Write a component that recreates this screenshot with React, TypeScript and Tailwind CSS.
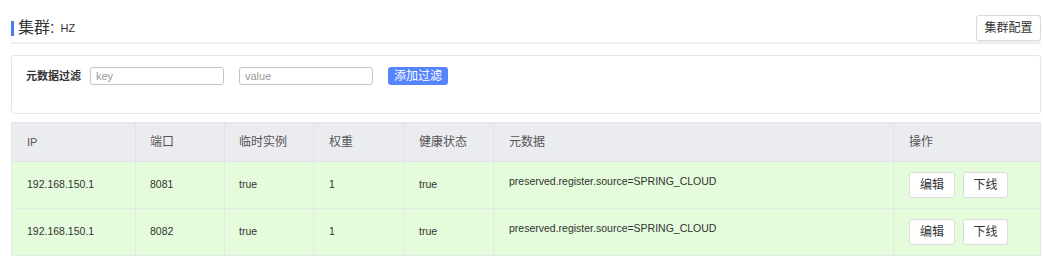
import React from 'react';

const rows = [
  { ip: '192.168.150.1', port: '8081', ephemeral: 'true', weight: '1', healthy: 'true', meta: 'preserved.register.source=SPRING_CLOUD' },
  { ip: '192.168.150.1', port: '8082', ephemeral: 'true', weight: '1', healthy: 'true', meta: 'preserved.register.source=SPRING_CLOUD' },
];

const font = { fontFamily: '"Liberation Sans", "Noto Sans CJK SC", sans-serif' };

const App = () => {
  return (
    <div className="w-[1043px] h-[260px] bg-white pl-[11px] pr-[2px] pt-[15px] text-[#333]" style={font}>
      <div className="flex items-center justify-between h-[26px]">
        <div className="flex items-center">
          <span className="w-[3px] h-[15px] bg-[#4a7bf7] mr-[4px]" />
          <span className="text-[16px] text-[#333] leading-none">集群:</span>
          <span className="text-[11px] text-[#333] ml-[6px]">HZ</span>
        </div>
        <button className="w-[65px] h-[26px] border border-[#d9d9d9] rounded-[3px] text-[12px] text-[#333] bg-white shadow-[0_1px_1px_rgba(0,0,0,0.05)]">
          集群配置
        </button>
      </div>
      <div className="mt-[1px] h-[2px] bg-[#eeeeee]" />

      <div className="mt-[11px] h-[59px] border border-[#e6e6e6] rounded-[3px] px-[14px] pt-[11px]">
        <div className="flex items-center h-[18px]">
          <span className="text-[11px] font-bold text-[#333] w-[64px]">元数据过滤</span>
          <input
            placeholder="key"
            className="w-[134px] h-[18px] border border-[#c4c6cf] rounded-[3px] px-[5px] text-[11px] placeholder:text-[#999] outline-none"
          />
          <input
            placeholder="value"
            className="ml-[15px] w-[134px] h-[18px] border border-[#c4c6cf] rounded-[3px] px-[5px] text-[11px] placeholder:text-[#999] outline-none"
          />
          <button className="ml-[15px] w-[60px] h-[18px] bg-[#5584ff] rounded-[3px] text-[12px] text-white leading-none">
            添加过滤
          </button>
        </div>
      </div>

      <table className="mt-[8px] w-full border-collapse text-[12px] text-[#333]">
        <thead>
          <tr className="h-[39px] bg-[#ebecf0] text-left text-[#555]">
            <th className="w-[124px] pl-[15px] font-normal text-[11px] border border-[#e3e4e8]">IP</th>
            <th className="w-[89px] pl-[14px] font-normal border border-[#e3e4e8]">端口</th>
            <th className="w-[89px] pl-[14px] font-normal border border-[#e3e4e8]">临时实例</th>
            <th className="w-[90px] pl-[15px] font-normal border border-[#e3e4e8]">权重</th>
            <th className="w-[90px] pl-[15px] font-normal border border-[#e3e4e8]">健康状态</th>
            <th className="w-[400px] pl-[15px] font-normal border border-[#e3e4e8]">元数据</th>
            <th className="pl-[15px] font-normal border border-[#e3e4e8]">操作</th>
          </tr>
        </thead>
        <tbody>
          {rows.map((r, i) => (
            <tr key={i} className="h-[47px] bg-[#e4fcdb] text-[10.5px]">
              <td className="pl-[15px] border border-[#e3ece0]">{r.ip}</td>
              <td className="pl-[14px] border border-[#e3ece0]">{r.port}</td>
              <td className="pl-[14px] border border-[#e3ece0]">{r.ephemeral}</td>
              <td className="pl-[15px] border border-[#e3ece0]">{r.weight}</td>
              <td className="pl-[15px] border border-[#e3ece0]">{r.healthy}</td>
              <td className="pl-[15px] align-top pt-[12px] border border-[#e3ece0]">{r.meta}</td>
              <td className="pl-[15px] border border-[#e3ece0]">
                <div className="flex gap-[8px]">
                  <button className="w-[46px] h-[26px] bg-white border border-[#dcdcdc] rounded-[3px] text-[12px] text-[#333]">编辑</button>
                  <button className="w-[45px] h-[26px] bg-white border border-[#dcdcdc] rounded-[3px] text-[12px] text-[#333]">下线</button>
                </div>
              </td>
            </tr>
          ))}
        </tbody>
      </table>
    </div>
  );
};

export default App;
